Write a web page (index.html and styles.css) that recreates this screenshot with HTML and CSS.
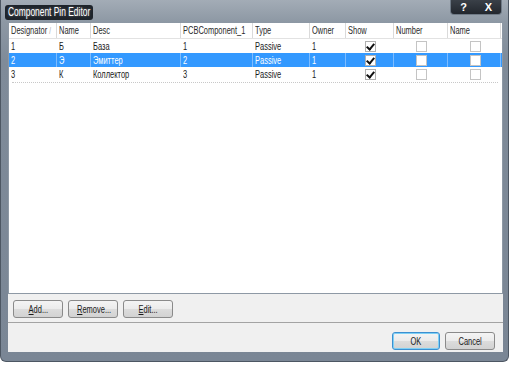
FILE: index.html
```html
<!DOCTYPE html>
<html>
	<head>
		<meta charset="utf-8">
		<title>Component Pin Editor</title>
		<link rel="stylesheet" href="styles.css">
	</head>
	<body>
		<div class="dialog">
			<div class="titlebar">
				<div class="title"><span class="t">Component Pin Editor</span></div>
				<div class="caption-buttons"><span>?</span><span>X</span></div>
			</div>

			<div class="client">
				<div class="grid">
					<div class="grid-row grid-head">
						<div class="cell"><span class="t">Designator <i class="sort">/</i></span></div>
						<div class="cell"><span class="t">Name</span></div>
						<div class="cell"><span class="t">Desc</span></div>
						<div class="cell"><span class="t">PCBComponent_1</span></div>
						<div class="cell"><span class="t">Type</span></div>
						<div class="cell"><span class="t">Owner</span></div>
						<div class="cell"><span class="t">Show</span></div>
						<div class="cell"><span class="t">Number</span></div>
						<div class="cell"><span class="t">Name</span></div>
						<div class="cell"></div>
					</div>
					<div class="grid-row">
						<div class="cell"><span class="t">1</span></div>
						<div class="cell"><span class="t">Б</span></div>
						<div class="cell"><span class="t">База</span></div>
						<div class="cell"><span class="t">1</span></div>
						<div class="cell"><span class="t">Passive</span></div>
						<div class="cell"><span class="t">1</span></div>
						<div class="cell chk-cell"><i class="chk on"></i></div>
						<div class="cell chk-cell"><i class="chk"></i></div>
						<div class="cell chk-cell"><i class="chk"></i></div>
						<div class="cell"></div>
					</div>
					<div class="grid-row selected">
						<div class="cell"><span class="t">2</span></div>
						<div class="cell"><span class="t">Э</span></div>
						<div class="cell"><span class="t">Эмиттер</span></div>
						<div class="cell"><span class="t">2</span></div>
						<div class="cell"><span class="t">Passive</span></div>
						<div class="cell"><span class="t">1</span></div>
						<div class="cell chk-cell"><i class="chk on"></i></div>
						<div class="cell chk-cell"><i class="chk"></i></div>
						<div class="cell chk-cell"><i class="chk"></i></div>
						<div class="cell"></div>
					</div>
					<div class="grid-row">
						<div class="cell"><span class="t">3</span></div>
						<div class="cell"><span class="t">К</span></div>
						<div class="cell"><span class="t">Коллектор</span></div>
						<div class="cell"><span class="t">3</span></div>
						<div class="cell"><span class="t">Passive</span></div>
						<div class="cell"><span class="t">1</span></div>
						<div class="cell chk-cell"><i class="chk on"></i></div>
						<div class="cell chk-cell"><i class="chk"></i></div>
						<div class="cell chk-cell"><i class="chk"></i></div>
						<div class="cell"></div>
					</div>
					<div class="grid-empty"></div>
				</div>

				<div class="toolbar">
					<button class="btn"><span class="t"><u>A</u>dd...</span></button>
					<button class="btn"><span class="t"><u>R</u>emove...</span></button>
					<button class="btn"><span class="t"><u>E</u>dit...</span></button>
				</div>

				<div class="footer">
					<button class="btn btn-default"><span class="t">OK</span></button>
					<button class="btn"><span class="t">Cancel</span></button>
				</div>
			</div>
		</div>
	</body>
</html>
```

FILE: styles.css
```css
body{
	margin: 0;
	background: #ffffff;
	font-family: "Liberation Sans", Arial, sans-serif;
	font-size: 11px;
	color: #1a1a1a;
}
/* the old dialog font is tall and narrow */
.t{
	display: inline-block;
	white-space: nowrap;
	transform: scaleX(0.68);
	transform-origin: 0 50%;
}
.dialog{
	display: flex;
	flex-direction: column;
	width: 509px;
	height: 362px;
	box-sizing: border-box;
	padding: 0 5px 9px 7px;
	background: linear-gradient(to bottom, #a3acb6 0px, #8d98a4 22px, #7f8b99 60px, #7a8695 100%);
	border-left: 1px solid #4d5763;
	border-right: 1px solid #4d5763;
	border-bottom: 1px solid #4d5763;
	border-radius: 0 0 6px 6px;
}

/* title bar */
.titlebar{
	display: flex;
	justify-content: space-between;
	align-items: flex-start;
	height: 23px;
	margin-left: -3px;
}
.title{
	width: 83px;
	margin-top: 5px;
	height: 15px;
	line-height: 15px;
	padding: 0 2px 0 3px;
	background: #1e242b;
	border-radius: 3px;
	color: #ffffff;
	font-size: 12px;
	text-shadow: 0 0 3px rgba(255,255,255,0.4);
	overflow: hidden;
}
.title .t{
	transform: scaleX(0.7);
}
.caption-buttons{
	display: flex;
	width: 52px;
	height: 15px;
	margin-right: 1px;
	background: linear-gradient(to bottom, #3a4048, #22272e);
	border-radius: 0 0 4px 4px;
	border: 1px solid #6f7a86;
	border-top: 0;
	box-sizing: border-box;
}
.caption-buttons span{
	flex: 1;
	text-align: center;
	line-height: 14px;
	color: #ffffff;
	font-weight: bold;
	font-size: 11px;
}

/* client area */
.client{
	flex: 1;
	display: flex;
	flex-direction: column;
	background: #f0f0f0;
}
.grid{
	display: flex;
	flex-direction: column;
	height: 271px;
	box-sizing: border-box;
	background: #ffffff;
	border: 1px solid #8e99a5;
	border-top: 0;
}
.grid-row{
	display: grid;
	grid-template-columns: 48px 34px 90px 72px 57px 36px 48px 54px 53px 1fr;
	height: 14px;
	line-height: 14px;
}
.cell{
	padding-left: 2px;
	border-right: 1px solid transparent;
	white-space: nowrap;
	overflow: hidden;
}
.grid-head{
	height: 15px;
	line-height: 14px;
	border-bottom: 1px solid #e2e2e2;
	color: #2a2a2a;
}
.grid-head .cell{
	border-right: 1px solid #dadada;
}
.grid-head .cell:last-child{
	border-right: 0;
}
.sort{
	font-style: normal;
	color: #a9a9a9;
	font-size: 9px;
}
.grid-row.selected{
	background: #3399ff;
	color: #ffffff;
}
.grid-row.selected .cell{
	border-right-color: #7dbcff;
}
.grid-row.selected .cell:last-child{
	border-right-color: transparent;
}
.chk-cell{
	display: flex;
	justify-content: center;
	align-items: center;
}
.chk{
	display: block;
	width: 9px;
	height: 9px;
	border: 1px solid #c4c4c4;
	background: #ffffff;
	position: relative;
}
.chk.on{
	border-color: #b0b0b0;
}
.chk.on::after{
	content: "";
	position: absolute;
	left: 2px;
	top: 0px;
	width: 3px;
	height: 6px;
	border-right: 2px solid #111111;
	border-bottom: 2px solid #111111;
	transform: rotate(40deg);
}
.grid-empty{
	flex: 1;
	margin: 1px 4px 0 3px;
	border-top: 1px dotted #c8c8c8;
}

/* buttons */
.toolbar{
	display: flex;
	gap: 5px;
	height: 29px;
	box-sizing: border-box;
	padding: 6px 0 0 5px;
	border-bottom: 1px solid #a3a3a3;
}
.footer{
	flex: 1;
	display: flex;
	justify-content: flex-end;
	gap: 5px;
	padding: 9px 8px 0 0;
}
.btn{
	width: 50px;
	height: 18px;
	padding: 0;
	font-family: inherit;
	font-size: 11px;
	color: #1a1a1a;
	background: linear-gradient(to bottom, #f4f4f4 0%, #ebebeb 50%, #dcdcdc 51%, #d2d2d2 100%);
	border: 1px solid #8a8a8a;
	border-radius: 3px;
	overflow: hidden;
}
.btn .t{
	transform-origin: 50% 50%;
}
.btn-default{
	width: 48px;
	border-color: #3c8fd0;
	box-shadow: inset 0 0 0 1px #7ed0f5;
}
```
